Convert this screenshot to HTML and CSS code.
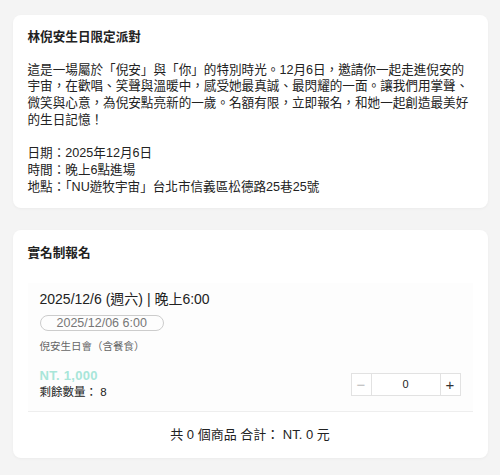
FILE: index.html
```html
<!DOCTYPE html>
<html lang="zh-Hant">
<head>
    <meta charset="UTF-8">
    <meta name="viewport" content="width=device-width, initial-scale=1.0">
    <title>林倪安生日限定派對</title>
    <link rel="stylesheet" href="styles.css">
</head>
<body>
    <div class="page">
        <section class="card">
            <h1 class="card-title">林倪安生日限定派對</h1>
            <p class="intro">這是一場屬於「倪安」與「你」的特別時光。12月6日，邀請你一起走進倪安的宇宙，在歡唱、笑聲與溫暖中，感受她最真誠、最閃耀的一面。讓我們用掌聲、微笑與心意，為倪安點亮新的一歲。名額有限，立即報名，和她一起創造最美好的生日記憶！</p>
            <p class="details">日期：2025年12月6日<br>時間：晚上6點進場<br>地點：「NU遊牧宇宙」台北市信義區松德路25巷25號</p>
        </section>

        <section class="card">
            <h2 class="card-title">實名制報名</h2>
            <div class="ticket">
                <div class="ticket-date">2025/12/6 (週六) | 晚上6:00</div>
                <span class="session-pill">2025/12/06 6:00</span>
                <div class="ticket-name">倪安生日會（含餐食）</div>
                <div class="ticket-row">
                    <div class="ticket-info">
                        <div class="price">NT. 1,000</div>
                        <div class="stock">剩餘數量：&nbsp;8</div>
                    </div>
                    <div class="qty">
                        <button class="qty-btn minus" type="button">&minus;</button>
                        <input class="qty-input" type="text" value="0">
                        <button class="qty-btn plus" type="button">+</button>
                    </div>
                </div>
            </div>
            <div class="summary">共 0 個商品 合計： NT. 0 元</div>
        </section>
    </div>
</body>
</html>
```

FILE: styles.css
```css
:root {
    --text-color: #222;
    --muted-color: #666;
    --border-color: #e2e2e2;
    --mint: #a8e6d9;
}

* {
    margin: 0;
    padding: 0;
    box-sizing: border-box;
    font-family: "Liberation Sans", "Noto Sans CJK TC", sans-serif;
}

body {
    background-color: #f4f4f4;
    color: var(--text-color);
    font-size: 12.6px;
}

.page {
    width: 475px;
    margin: 0 auto;
    padding-top: 15px;
}

.card {
    background: #fff;
    border-radius: 8px;
    padding: 14px 15px 13px;
    margin-bottom: 22px;
    box-shadow: 0 1px 3px rgba(0, 0, 0, 0.04);
}

.card-title {
    font-size: 12.6px;
    font-weight: bold;
    line-height: 16px;
}

.intro,
.details {
    line-height: 16.7px;
    margin-top: 16.7px;
}

.card + .card {
    padding-top: 15px;
    padding-bottom: 15px;
}

.ticket {
    margin-top: 22px;
    padding: 8px 12px 11px;
    background: #fdfdfd;
    border-bottom: 1px solid #eee;
}

.ticket-date {
    font-size: 14px;
    line-height: 16px;
}

.session-pill {
    display: inline-block;
    margin-top: 8px;
    padding: 0 16px;
    height: 16px;
    line-height: 14px;
    border: 1px solid #ccc;
    border-radius: 8px;
    font-size: 12.5px;
    color: #777;
}

.ticket-name {
    margin-top: 7px;
    font-size: 10.5px;
    line-height: 16px;
    color: var(--muted-color);
}

.ticket-row {
    margin-top: 14px;
    display: flex;
    align-items: center;
    justify-content: space-between;
}

.price {
    color: var(--mint);
    font-size: 13px;
    font-weight: bold;
    letter-spacing: 0.3px;
    line-height: 16px;
}

.stock {
    font-size: 11.5px;
    line-height: 16px;
}

.qty {
    display: flex;
    height: 23px;
    border: 1px solid var(--border-color);
}

    .qty-btn {
        width: 20px;
        border: none;
        background: #fff;
        font-size: 15px;
        line-height: 1;
        cursor: pointer;
    }

    .qty-btn.minus {
        color: #bbb;
        border-right: 1px solid var(--border-color);
    }

    .qty-btn.plus {
        color: #333;
        border-left: 1px solid var(--border-color);
    }

.qty-input {
    width: 68px;
    border: none;
    text-align: center;
    font-size: 11px;
    color: #222;
    outline: none;
}

.summary {
    padding-top: 15px;
    text-align: center;
    font-size: 13px;
    line-height: 16px;
}
```
